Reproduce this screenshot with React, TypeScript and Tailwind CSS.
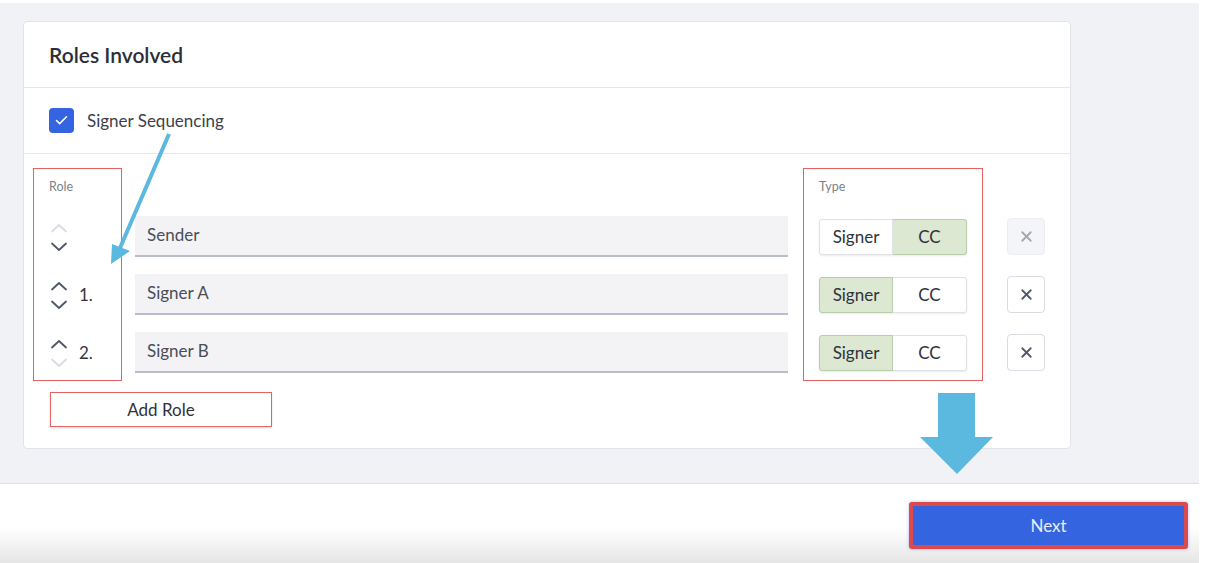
import { Check, X } from 'lucide-react'

interface RoleRow {
  name: string
  num?: string
  upDisabled: boolean
  downDisabled: boolean
  type: 'signer' | 'cc'
  removable: boolean
}

const rows: RoleRow[] = [
  { name: 'Sender', upDisabled: true, downDisabled: false, type: 'cc', removable: false },
  { name: 'Signer A', num: '1.', upDisabled: false, downDisabled: false, type: 'signer', removable: true },
  { name: 'Signer B', num: '2.', upDisabled: false, downDisabled: true, type: 'signer', removable: true },
]

function Chevron({ up, disabled }: { up: boolean; disabled: boolean }) {
  return (
    <svg
      width="18"
      height="10"
      viewBox="0 0 18 10"
      fill="none"
      stroke="currentColor"
      strokeWidth="1.8"
      strokeLinecap="round"
      strokeLinejoin="round"
      className={disabled ? 'text-[#d8dbe1]' : 'text-[#4f5667]'}
    >
      <polyline points={up ? '2,8.5 9,2 16,8.5' : '2,1.5 9,8 16,1.5'} />
    </svg>
  )
}

export default function App() {
  return (
    <div
      className="relative w-[1205px] h-[563px] overflow-hidden bg-white text-[#33363f]"
      style={{ fontFamily: 'Lato, "Open Sans", sans-serif' }}
    >
      <div className="w-[1199px] mt-[3px] h-[481px] bg-[#f1f2f6] border-b border-[#dcdfe8] pt-[18px] pl-[23px]">
        {/* Card */}
        <div className="w-[1048px] h-[428px] bg-white border border-[#e1e3ea] rounded-[4px] flex flex-col">
          <div className="h-[66px] flex items-center pl-[25px] border-b border-[#e4e6ec]">
            <h2 className="text-[21px] font-semibold text-[#2b2e36]">Roles Involved</h2>
          </div>
          <div className="h-[66px] flex items-center pl-[25px] gap-[13px] border-b border-[#e4e6ec]">
            <div className="w-[25px] h-[25px] rounded-[4px] bg-[#3564e0] flex items-center justify-center">
              <Check size={15} strokeWidth={2.5} className="text-white" />
            </div>
            <span className="text-[17px] text-[#3c3f48]">Signer Sequencing</span>
          </div>

          {/* Body */}
          <div className="pt-[14px] pl-[9px]">
            <div className="flex">
              {/* Role column */}
              <div className="w-[89px] h-[213px] border-[1.5px] border-[#e66262] pl-[15px]">
                <div className="h-[39px] pt-[9px] text-[12.5px] text-[#7b7f8a]">Role</div>
                {rows.map((r) => (
                  <div key={r.name} className="h-[58px] flex items-center gap-[11px]">
                    <div className="flex flex-col gap-[9px] pl-[1px]">
                      <Chevron up disabled={r.upDisabled} />
                      <Chevron up={false} disabled={r.downDisabled} />
                    </div>
                    {r.num && <span className="text-[17px] text-[#33363f]">{r.num}</span>}
                  </div>
                ))}
              </div>

              {/* Name inputs */}
              <div className="ml-[13px] w-[653px]">
                <div className="h-[39px]" />
                {rows.map((r) => (
                  <div key={r.name} className="h-[58px] flex items-center">
                    <div className="w-full h-[41px] bg-[#f3f3f5] border-b-2 border-[#babdcc] flex items-center pl-[12px] text-[17px] text-[#4a4d56]">
                      {r.name}
                    </div>
                  </div>
                ))}
              </div>

              {/* Type column */}
              <div className="ml-[15px] w-[180px] h-[213px] border-[1.5px] border-[#e66262] pl-[15px]">
                <div className="h-[39px] pt-[9px] text-[12.5px] text-[#7b7f8a]">Type</div>
                {rows.map((r) => (
                  <div key={r.name} className="h-[58px] flex items-center">
                    <div className="flex h-[36px] w-[148px] rounded-[3px] shadow-[0_1px_2px_rgba(0,0,0,0.08)] text-[17px] text-[#2f323a]">
                      <div
                        className={`w-[74px] flex items-center justify-center rounded-l-[3px] border ${
                          r.type === 'signer' ? 'bg-[#dce8d2] border-[#b8cda9]' : 'bg-white border-[#dfe1e6]'
                        }`}
                      >
                        Signer
                      </div>
                      <div
                        className={`w-[74px] flex items-center justify-center rounded-r-[3px] border border-l-0 ${
                          r.type === 'cc' ? 'bg-[#dce8d2] border-[#b8cda9]' : 'bg-white border-[#dfe1e6]'
                        }`}
                      >
                        CC
                      </div>
                    </div>
                  </div>
                ))}
              </div>

              {/* Remove buttons */}
              <div className="ml-[24px]">
                <div className="h-[39px]" />
                {rows.map((r) => (
                  <div key={r.name} className="h-[58px] flex items-center">
                    <div
                      className={`w-[38px] h-[37px] rounded-[4px] border flex items-center justify-center ${
                        r.removable
                          ? 'bg-white border-[#d9dce3] text-[#525866]'
                          : 'bg-[#f4f5f8] border-[#eceef2] text-[#a3a7b0]'
                      }`}
                    >
                      <X size={17} strokeWidth={2.5} />
                    </div>
                  </div>
                ))}
              </div>
            </div>

            <button className="mt-[11px] ml-[17px] w-[222px] h-[35px] bg-white border-[1.5px] border-[#e66262] shadow-[0_1px_2px_rgba(0,0,0,0.12)] text-[17px] text-[#2f323a]">
              Add Role
            </button>
          </div>
        </div>
      </div>

      {/* Footer */}
      <div className="w-[1199px] h-[79px] bg-gradient-to-b from-white from-55% to-[#e6e6e6] flex justify-end items-start pt-[18px] pr-[11px]">
        <button className="w-[279px] h-[47px] bg-[#3564e0] border-[4px] border-[#dd4a4e] rounded-[3px] shadow-[0_0_3px_rgba(80,100,230,0.5)] text-[17px] text-[#e8edff]">
          Next
        </button>
      </div>

      {/* Annotation arrows */}
      <svg className="absolute left-0 top-0 pointer-events-none" width="1205" height="563" viewBox="0 0 1205 563">
        <line x1="169" y1="134" x2="120" y2="248" stroke="#5bb8de" strokeWidth="4" />
        <polygon points="111,264 112,244 130,251" fill="#5bb8de" />
        <polygon points="938,393 975,393 975,437 993,437 957,474 920,437 938,437" fill="#5bb8de" />
      </svg>
    </div>
  )
}
